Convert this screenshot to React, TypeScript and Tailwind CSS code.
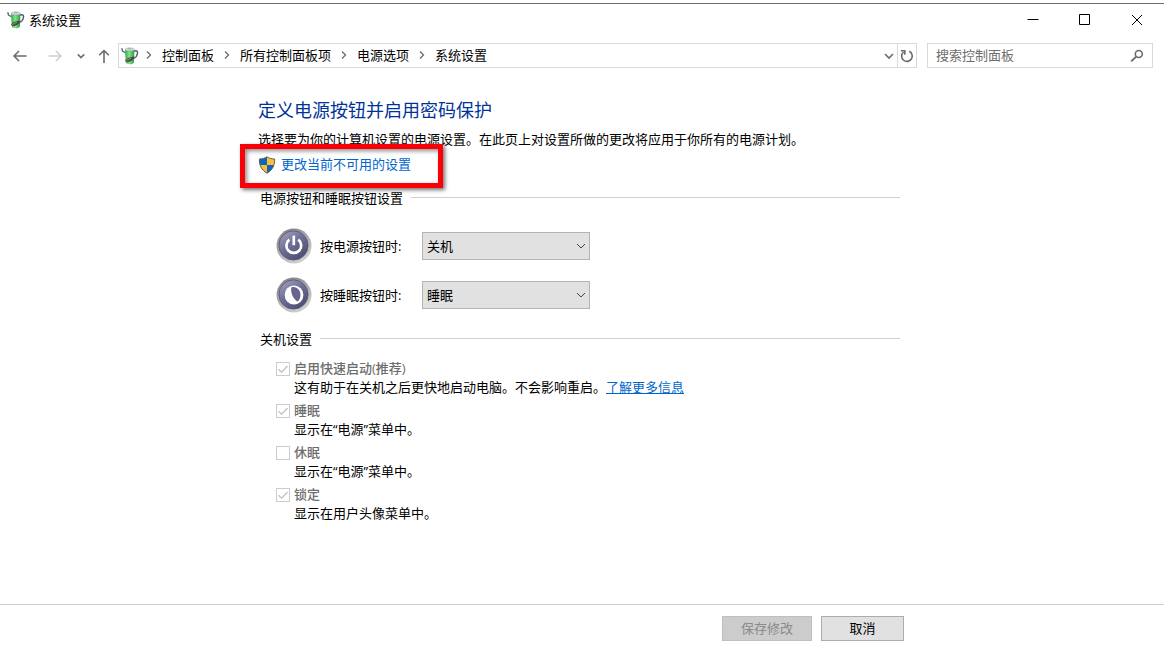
import React from "react";

function PowerPlanIcon() {
  return (
    <svg viewBox="0 0 18 18" className="h-[18px] w-[18px] shrink-0" aria-hidden="true">
      <defs>
        <linearGradient id="cell" x1="0" x2="1">
          <stop offset="0" stopColor="#2fa544" />
          <stop offset="0.45" stopColor="#7ae886" />
          <stop offset="1" stopColor="#2f9a42" />
        </linearGradient>
      </defs>
      <path d="M0.700 1.200l.8 2.800 3 1.800" fill="none" stroke="#5c6176" strokeWidth="1.300" />
      <path d="M13 4.200c3.200-1.200 4.200.4 3.200 3.400-.6 2-1.600 3.200-3 3.800" fill="none" stroke="#565b72" strokeWidth="1.500" />
      <path d="M4 3l9.400-.4-.4 12.800c-1.600 2.400-6.200 2.400-8.200.4z" fill="url(#cell)" />
      <ellipse cx="8.700" cy="2.500" rx="4.700" ry="1.500" fill="#d3dbd8" stroke="#84918d" strokeWidth="0.500" />
      <path d="M7 0.800h3.400v1.500H7z" fill="#a9b4b1" />
      <path d="M4 13.600c1.600-2.400 5.200-3.800 9.800-4.200-.8 2.800-3.200 5-6.800 5.600-1.400.2-2.600-.4-3-1.400z" fill="#4a4650" />
      <path d="M5.200 13.600l4.800-2.400" stroke="#b08a62" strokeWidth="1" />
    </svg>
  );
}

function ShieldIcon() {
  return (
    <svg viewBox="0 0 18 18" className="h-[18px] w-[18px] shrink-0" aria-hidden="true">
      <defs>
        <clipPath id="shield">
          <path d="M9 0.800c2.200 1.400 4.600 2.200 7.600 2.200.2 6.200-1.800 10.800-7.600 14.200C3.200 13.800 1.200 9.200 1.400 3c3 0 5.400-.8 7.600-2.200z" />
        </clipPath>
      </defs>
      <g clipPath="url(#shield)">
        <path d="M0 0h9v9H0zM9 9h9v9H9z" fill="#0d67bf" />
        <path d="M9 0h9v9H9zM0 9h9v9H0z" fill="#fcbf34" />
      </g>
      <path d="M9 0.800c2.200 1.400 4.600 2.200 7.600 2.200.2 6.200-1.800 10.800-7.600 14.200C3.200 13.800 1.200 9.200 1.400 3c3 0 5.400-.8 7.600-2.200z" fill="none" stroke="#5a5a5a" strokeWidth="1" />
    </svg>
  );
}

function RoundButtonIcon({ kind }: { kind: "power" | "sleep" }) {
  return (
    <svg viewBox="0 0 36 36" className="h-9 w-9 shrink-0" aria-hidden="true">
      <defs>
        <linearGradient id={`rim-${kind}`} x1="0.2" y1="0" x2="0.7" y2="1">
          <stop offset="0" stopColor="#7d7d84" />
          <stop offset="0.5" stopColor="#adadb1" />
          <stop offset="1" stopColor="#d2d2d4" />
        </linearGradient>
        <linearGradient id={`face-${kind}`} x1="0.1" y1="0" x2="0.8" y2="1">
          <stop offset="0" stopColor="#a5a4c0" />
          <stop offset="0.450" stopColor="#706f97" />
          <stop offset="1" stopColor="#4a4970" />
        </linearGradient>
      </defs>
      <circle cx="18" cy="18" r="17.500" fill={`url(#rim-${kind})`} />
      <circle cx="17.500" cy="17.500" r="14.600" fill={`url(#face-${kind})`} stroke="#55546f" strokeWidth="0.800" />
      {kind === "power" ? (
        <g fill="none" stroke="#fff" strokeWidth="2.700">
          <path d="M13.400 11.600a7.400 7.400 0 1 0 8.800 0" />
          <path d="M17.800 7.600v9.600" />
        </g>
      ) : (
        <g>
          <circle cx="18" cy="18" r="9.400" fill="#fff" />
          <path d="M15.300 10.400C20 9 24.200 12.700 24.500 17.600c.1 3-1 5.400-2.900 7C17.800 22.300 14.200 16.500 15.300 10.400z" fill="#66658e" />
        </g>
      )}
    </svg>
  );
}

function Chevron({ dir, className }: { dir: "right" | "down"; className: string }) {
  return (
    <svg viewBox="0 0 10 10" className={className} fill="none" stroke="currentColor" aria-hidden="true">
      <path d={dir === "right" ? "M3 1.500L6.500 5L3 8.500" : "M1 3L5 7L9 3"} />
    </svg>
  );
}

function Breadcrumb({ label }: { label: string }) {
  return (
    <li className="flex items-center">
      <span className="flex w-[26px] justify-center">
        <Chevron dir="right" className="h-[10px] w-[10px] stroke-[1.3] text-[#6b6b6b]" />
      </span>
      <a href="#">{label}</a>
    </li>
  );
}

function SectionTitle({ children }: { children: React.ReactNode }) {
  return (
    <div className="ml-0.5 mr-1.5 flex items-center gap-2">
      <h2>{children}</h2>
      <span className="mb-0.5 h-px flex-1 bg-[#cfcfcf]" />
    </div>
  );
}

function ActionRow({ kind, label, value }: { kind: "power" | "sleep"; label: string; value: string }) {
  return (
    <div className="flex items-center">
      <RoundButtonIcon kind={kind} />
      <label htmlFor={kind} className="ml-2 w-[102px]">
        {label}
      </label>
      <div className="grid items-center">
        <select
          id={kind}
          defaultValue={value}
          className="col-start-1 row-start-1 h-7 w-[168px] appearance-none border border-[#b4b4b4] bg-[#e1e1e1] pl-1 text-black"
        >
          <option>{value}</option>
        </select>
        <Chevron dir="down" className="pointer-events-none col-start-1 row-start-1 mr-1 h-[10px] w-[10px] justify-self-end text-[#444]" />
      </div>
    </div>
  );
}

type Option = { id: string; label: string; checked: boolean; text: string; link?: string };

const options: Option[] = [
  { id: "fast", label: "启用快速启动(推荐)", checked: true, text: "这有助于在关机之后更快地启动电脑。不会影响重启。", link: "了解更多信息" },
  { id: "sleep-menu", label: "睡眠", checked: true, text: "显示在“电源”菜单中。" },
  { id: "hibernate", label: "休眠", checked: false, text: "显示在“电源”菜单中。" },
  { id: "lock", label: "锁定", checked: true, text: "显示在用户头像菜单中。" },
];

function OptionItem({ option }: { option: Option }) {
  return (
    <li>
      <div className="flex items-center gap-1">
        <span className="grid">
          <input
            id={option.id}
            type="checkbox"
            disabled
            defaultChecked={option.checked}
            className="peer col-start-1 row-start-1 h-[14px] w-[14px] appearance-none border border-[#cccccc] bg-white"
          />
          <svg viewBox="0 0 14 14" className="pointer-events-none invisible col-start-1 row-start-1 h-[14px] w-[14px] peer-checked:visible" aria-hidden="true">
            <path d="M2.500 7.200L5.600 10.200L11.500 4" fill="none" stroke="#c0c0c0" strokeWidth="1.300" />
          </svg>
        </span>
        <label htmlFor={option.id} className="font-medium text-[#6d6d6d]">
          {option.label}
        </label>
      </div>
      <p className="ml-[18px]">
        {option.text}
        {option.link && (
          <a href="#" className="text-[#0066cc] underline">
            {option.link}
          </a>
        )}
      </p>
    </li>
  );
}

export default function App() {
  return (
    <div className="flex min-h-screen flex-col bg-white pt-[3px] font-['Open_Sans','Noto_Sans_CJK_SC',sans-serif] text-[13px] leading-[19px] text-black">
      <header className="border-t border-[#6e6e6e]">
        <div className="flex h-8 items-center justify-between pl-[7px] pr-px">
          <div className="flex items-center gap-1">
            <PowerPlanIcon />
            <h1>系统设置</h1>
          </div>
          <div className="flex">
            <button aria-label="最小化" className="flex h-8 w-[52px] items-center justify-center">
              <svg viewBox="0 0 12 12" className="h-3 w-3"><path d="M0.500 5.500h11" stroke="#000" /></svg>
            </button>
            <button aria-label="最大化" className="flex h-8 w-[52px] items-center justify-center">
              <svg viewBox="0 0 12 12" className="h-3 w-3"><path d="M0.500 0.500h10v10h-10z" fill="none" stroke="#000" /></svg>
            </button>
            <button aria-label="关闭" className="flex h-8 w-[52px] items-center justify-center">
              <svg viewBox="0 0 12 12" className="h-3 w-3"><path d="M1 1l10 10M11 1L1 11" fill="none" stroke="#000" /></svg>
            </button>
          </div>
        </div>

        <div className="flex items-center pl-3 pr-[11px] pt-[7px]">
          <nav className="flex items-center text-[#6b6b6b]">
            <button aria-label="后退" className="flex w-4 justify-center">
              <svg viewBox="0 0 16 14" className="h-[14px] w-4" fill="none" stroke="currentColor" strokeWidth="1.500"><path d="M14.500 7H2M7 2L2 7l5 5" /></svg>
            </button>
            <button aria-label="前进" className="ml-[19px] flex w-4 justify-center text-[#d0d0d0]">
              <svg viewBox="0 0 16 14" className="h-[14px] w-4" fill="none" stroke="currentColor" strokeWidth="1.500"><path d="M1.500 7H14M9 2l5 5-5 5" /></svg>
            </button>
            <button aria-label="最近浏览的位置" className="ml-3 flex w-3 justify-center">
              <Chevron dir="down" className="h-2 w-2 stroke-[1.9]" />
            </button>
            <button aria-label="上移" className="ml-[11px] flex w-3 justify-center">
              <svg viewBox="0 0 12 14" className="h-[14px] w-3 shrink-0" fill="none" stroke="currentColor" strokeWidth="1.600"><path d="M6 14V1.500M1.200 6.200L6 1.500l4.800 4.700" /></svg>
            </button>
          </nav>
          <div className="ml-2 flex h-[25px] flex-1 items-center border border-[#d9d9d9]">
            <span className="ml-0.5">
              <PowerPlanIcon />
            </span>
            <ol className="-ml-[3px] flex flex-1 items-center pb-px">
              <Breadcrumb label="控制面板" />
              <Breadcrumb label="所有控制面板项" />
              <Breadcrumb label="电源选项" />
              <Breadcrumb label="系统设置" />
            </ol>
            <button aria-label="以前的位置" className="flex w-4 justify-center text-[#6b6b6b]">
              <Chevron dir="down" className="h-[10px] w-[10px] stroke-[1.6]" />
            </button>
            <button aria-label="刷新" className="flex h-full w-[19px] items-center justify-center border-l border-[#d9d9d9] text-[#6b6b6b]">
              <svg viewBox="0 0 14 14" className="h-[14px] w-[14px]" fill="none" stroke="currentColor" strokeWidth="1.600">
                <path d="M9.200 2.300A5.300 5.300 0 1 1 3.600 3" />
                <path d="M0.800 1.800h4v4" />
              </svg>
            </button>
          </div>
          <div className="ml-[10px] flex h-[25px] w-[226px] items-center border border-[#d9d9d9] pl-2 pr-2">
            <input aria-label="搜索控制面板" placeholder="搜索控制面板" className="min-w-0 flex-1 outline-none placeholder:text-[#6d6d6d]" />
            <svg viewBox="0 0 14 14" className="h-[14px] w-[14px] text-[#6b6b6b]" fill="none" stroke="currentColor" aria-hidden="true">
              <circle cx="8.800" cy="5" r="3.500" strokeWidth="1.600" />
              <path d="M6.200 7.600L1.200 12.400" strokeWidth="1.900" />
            </svg>
          </div>
        </div>
      </header>

      <main className="mx-auto w-full max-w-[648px] flex-1 pt-7">
        <h2 className="text-lg leading-7 text-[#003399]">定义电源按钮并启用密码保护</h2>
        <p className="mt-1.5">选择要为你的计算机设置的电源设置。在此页上对设置所做的更改将应用于你所有的电源计划。</p>
        <div className="relative mt-1.5 flex">
          <a href="#" className="flex items-center gap-[5px] text-[#0066cc]">
            <ShieldIcon />
            更改当前不可用的设置
          </a>
          <span className="pointer-events-none absolute -left-[18px] -top-[11px] h-11 w-[203px] border-[5px] border-[#fb0007] shadow-[2px_2px_4px_rgba(0,0,0,0.55),inset_2px_2px_4px_rgba(0,0,0,0.45)]" />
        </div>

        <section className="mt-[15px]">
          <SectionTitle>电源按钮和睡眠按钮设置</SectionTitle>
          <div className="ml-[18px] mt-5 flex flex-col gap-[13px]">
            <ActionRow kind="power" label="按电源按钮时:" value="关机" />
            <ActionRow kind="sleep" label="按睡眠按钮时:" value="睡眠" />
          </div>
        </section>

        <section className="mt-[17px]">
          <SectionTitle>关机设置</SectionTitle>
          <ul className="ml-[18px] mt-2.5 flex flex-col gap-1">
            {options.map((option) => (
              <OptionItem key={option.id} option={option} />
            ))}
          </ul>
        </section>
      </main>

      <footer className="border-t border-[#cfcfcf]">
        <div className="mx-auto flex max-w-[648px] justify-end gap-[9px] pb-3 pr-0.5 pt-[11px]">
          <button disabled className="h-[25px] w-[90px] border border-[#bfbfbf] bg-[#cccccc] text-[#8a8a8a]">
            保存修改
          </button>
          <button className="h-[25px] w-[83px] border border-[#adadad] bg-[#e1e1e1]">取消</button>
        </div>
      </footer>
    </div>
  );
}
